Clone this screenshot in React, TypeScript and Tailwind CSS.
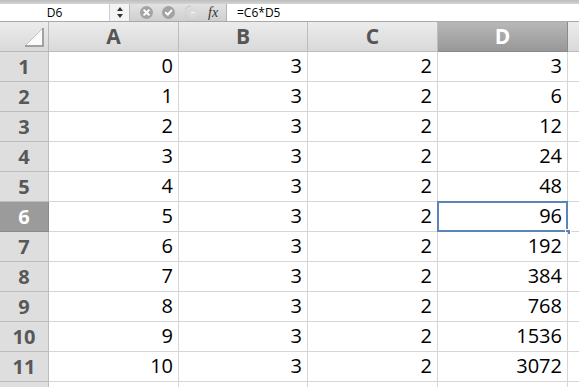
import React from "react";

const colW = [130, 129, 130, 130];
const letters = ["A", "B", "C", "D"];
const data: number[][] = [
  [0, 3, 2, 3],
  [1, 3, 2, 6],
  [2, 3, 2, 12],
  [3, 3, 2, 24],
  [4, 3, 2, 48],
  [5, 3, 2, 96],
  [6, 3, 2, 192],
  [7, 3, 2, 384],
  [8, 3, 2, 768],
  [9, 3, 2, 1536],
  [10, 3, 2, 3072],
];

const font = { fontFamily: '"Open Sans", "Noto Sans", sans-serif' };

function Toolbar() {
  return (
    <div className="flex h-[18px] border-b border-[#a9a9a9]" style={font}>
      <div className="w-[110px] bg-white flex items-center justify-center text-[12px] text-black border-r border-[#cfcfcf]">
        D6
      </div>
      <div className="w-[20px] bg-[#f4f4f4] flex items-center justify-center border-r border-[#bdbdbd]">
        <svg width="6" height="11" viewBox="0 0 6 11">
          <path d="M3 0 L6 4 L0 4 Z" fill="#333" />
          <path d="M3 11 L6 7 L0 7 Z" fill="#333" />
        </svg>
      </div>
      <div className="w-[97px] bg-gradient-to-b from-[#e2e2e2] to-[#cfcfcf] flex items-center border-r border-[#b5b5b5]">
        <svg className="ml-[10px]" width="13" height="13" viewBox="0 0 13 13">
          <circle cx="6.5" cy="6.5" r="6.5" fill="#a3a3a3" />
          <path d="M4.2 4.2 L8.8 8.8 M8.8 4.2 L4.2 8.8" stroke="#fff" strokeWidth="2" strokeLinecap="round" />
        </svg>
        <svg className="ml-[9px]" width="13" height="13" viewBox="0 0 13 13">
          <circle cx="6.5" cy="6.5" r="6.5" fill="#a3a3a3" />
          <path d="M3.8 6.8 L5.8 8.7 L9.3 4.6" stroke="#fff" strokeWidth="2" fill="none" strokeLinecap="round" strokeLinejoin="round" />
        </svg>
        <svg className="ml-[10px]" width="14" height="15" viewBox="0 0 14 15">
          <path d="M6 1 A6.5 6.5 0 0 0 6 14" stroke="#d0d0d0" strokeWidth="2" fill="none" />
          <circle cx="8" cy="7.5" r="5" fill="#d9d9d9" />
          <path d="M6 7.5 L10 7.5" stroke="#f2f2f2" strokeWidth="1.5" />
        </svg>
        <span
          className="ml-[9px] text-[14px] italic text-[#333] leading-none"
          style={{ fontFamily: '"Liberation Serif", serif' }}
        >
          fx
        </span>
      </div>
      <div className="flex-1 bg-white flex items-center pl-[10px] text-[12px] text-black">=C6*D5</div>
    </div>
  );
}

function HeaderRow() {
  return (
    <div className="flex h-[30px]" style={font}>
      <div className="w-[49px] shrink-0 bg-gradient-to-b from-[#ececec] to-[#d9d9d9] border-r border-b border-[#b9b9b9] relative">
        <svg className="absolute right-[4px] bottom-[4px]" width="20" height="20" viewBox="0 0 20 20">
          <path d="M19 1 L19 19 L1 19 Z" fill="#fafafa" stroke="#c4c4c4" strokeWidth="1" />
          <path d="M19 1 L19 19 L1 19" fill="none" stroke="#8e8e8e" strokeWidth="1.5" />
        </svg>
      </div>
      {letters.map((l, i) =>
        l === "D" ? (
          <div
            key={l}
            style={{ width: colW[i] }}
            className="shrink-0 bg-gradient-to-b from-[#b8b8b8] to-[#989898] border-r border-b border-[#8a8a8a] flex items-center justify-center text-[21px] font-bold text-white"
          >
            {l}
          </div>
        ) : (
          <div
            key={l}
            style={{ width: colW[i] }}
            className="shrink-0 bg-gradient-to-b from-[#ececec] to-[#d9d9d9] border-r border-b border-[#bdbdbd] flex items-center justify-center text-[21px] font-bold text-[#555]"
          >
            {l}
          </div>
        )
      )}
      <div className="flex-1 bg-gradient-to-b from-[#ececec] to-[#d9d9d9] border-b border-[#bdbdbd]" />
    </div>
  );
}

function DataRow({ idx, values }: { idx: number; values: number[] }) {
  const selected = idx === 6;
  return (
    <div className="flex h-[30px]" style={font}>
      <div
        className={
          selected
            ? "w-[49px] shrink-0 bg-[#9b9b9b] border-r border-b border-[#8a8a8a] flex items-center justify-center text-[20px] font-bold text-white"
            : "w-[49px] shrink-0 bg-[#dedede] border-r border-b border-[#bdbdbd] flex items-center justify-center text-[20px] font-bold text-[#585858]"
        }
      >
        {idx}
      </div>
      {values.map((v, i) => (
        <div
          key={i}
          style={{ width: colW[i] }}
          className="shrink-0 relative bg-white border-r border-b border-[#d6d6d6] flex items-end justify-end pr-[5px] pb-[1px] text-[20px] text-black leading-[28px]"
        >
          {v}
          {selected && i === 3 && (
            <>
              <div className="absolute left-[-1px] top-[-1px] right-[-1px] bottom-[-1px] border-2 border-[#5b84b8]" />
              <div className="absolute right-[-4px] bottom-[-4px] w-[6px] h-[6px] bg-[#5b84b8] border border-white" />
            </>
          )}
        </div>
      ))}
      <div className="flex-1 bg-white border-b border-[#d6d6d6]" />
    </div>
  );
}

export default function App() {
  return (
    <div className="w-[579px] h-[387px] overflow-hidden bg-white">
      <div className="h-[4px] bg-gradient-to-b from-[#bdbdbd] to-[#d4d4d4]" />
      <Toolbar />
      <HeaderRow />
      {data.map((r, i) => (
        <DataRow key={i} idx={i + 1} values={r} />
      ))}
      <div className="flex h-[30px]" style={font}>
        <div className="w-[49px] shrink-0 bg-[#dedede] border-r border-[#bdbdbd] flex items-center justify-center text-[20px] font-bold text-[#585858]">
          12
        </div>
        {colW.map((w, i) => (
          <div key={i} style={{ width: w }} className="shrink-0 bg-white border-r border-[#d6d6d6]" />
        ))}
      </div>
    </div>
  );
}
